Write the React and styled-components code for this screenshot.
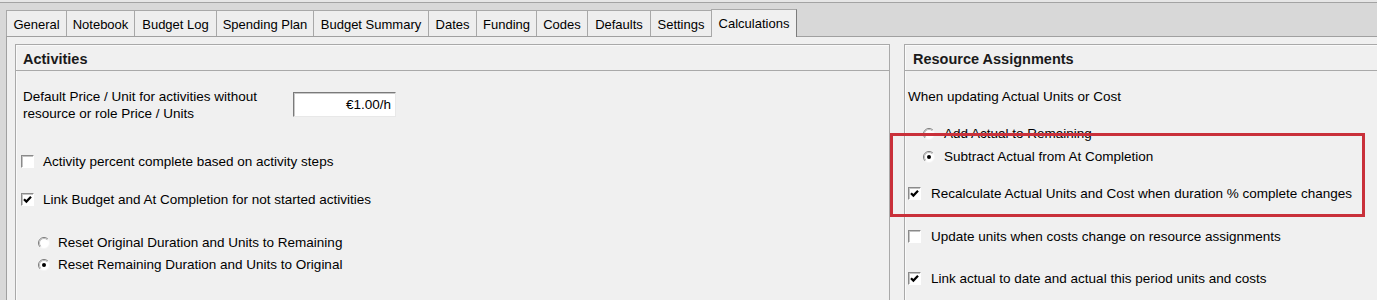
import React from 'react';
import styled, { createGlobalStyle } from 'styled-components';

const GlobalStyle = createGlobalStyle`
    html, body {
        margin: 0;
        padding: 0;
        background: #d8d8d8;
        overflow: hidden;
    }
`;

export const Window = styled.div`
    position: relative;
    width: 1377px;
    height: 300px;
    overflow: hidden;
    display: flex;
    flex-direction: column;
    background: #d8d8d8;
    font-family: "Liberation Sans", Arial, sans-serif;
    color: #000;
`;

export const TopEdge = styled.div`
    height: 2px;
    flex: none;
    background: #e6e6e6;
    border-bottom: 1px solid #a3a3a3;
`;

export const TabStrip = styled.div`
    height: 33px;
    flex: none;
    display: flex;
    align-items: flex-end;
    padding-left: 6px;
`;

export const Tab = styled.div`
    box-sizing: border-box;
    width: ${(p) => p.$w}px;
    height: ${(p) => (p.$active ? 28 : 26)}px;
    margin-bottom: ${(p) => (p.$active ? -1 : 0)}px;
    position: relative;
    z-index: ${(p) => (p.$active ? 2 : 0)};
    display: flex;
    align-items: center;
    justify-content: center;
    font-size: 13px;
    background: ${(p) => (p.$active ? '#f0f0f0' : '#eeeeee')};
    border-top: 1px solid #a8a8a8;
    border-left: 1px solid #a8a8a8;
    border-right: ${(p) => (p.$active ? '1px solid #7c7c7c' : 'none')};
    padding-top: ${(p) => (p.$active ? 0 : 1)}px;
`;

export const Panel = styled.div`
    flex: 1;
    margin-left: 6px;
    border-top: 1px solid #a0a0a0;
    border-left: 1px solid #a0a0a0;
    background: #f0f0f0;
    padding: 7px 0 0 8px;
    display: flex;
    gap: 14px;
`;

export const Group = styled.div`
    box-sizing: border-box;
    flex: none;
    width: ${(p) => p.$w}px;
    height: 290px;
    border: 1px solid #a9a9a9;
    box-shadow: inset 1px 1px 0 #fafafa;
    display: flex;
    flex-direction: column;
`;

export const GroupHeader = styled.div`
    height: 26px;
    flex: none;
    border-bottom: 1px solid #a9a9a9;
    display: flex;
    align-items: center;
    padding: 2px 0 0 ${(p) => p.$pl}px;
    box-sizing: border-box;
    font-weight: bold;
    font-size: 14.5px;
    color: #1a1a1a;
`;

export const GroupBody = styled.div`
    padding-left: ${(p) => p.$pl}px;
    display: flex;
    flex-direction: column;
    font-size: 13.5px;
`;

export const Row = styled.div`
    display: flex;
    align-items: center;
    height: 17px;
    line-height: 17px;
    margin-top: ${(p) => p.$mt}px;
    padding-left: ${(p) => p.$indent || 0}px;
    gap: ${(p) => p.$gap || 9}px;
    white-space: nowrap;
`;

export const PriceRow = styled.div`
    display: flex;
    align-items: center;
    margin-top: 16px;
    padding-left: 2px;
`;

export const PriceLabel = styled.div`
    width: 270px;
    line-height: 17px;
    padding-top: 1px;
`;

export const PriceInput = styled.div`
    box-sizing: border-box;
    width: 103px;
    height: 25px;
    background: #fff;
    border-style: solid;
    border-width: 1px;
    border-color: #7a7a7a #e8e8e8 #e8e8e8 #7a7a7a;
    box-shadow: inset 1px 1px 0 #c8c8c8;
    display: flex;
    align-items: center;
    justify-content: flex-end;
    padding-right: 4px;
    font-size: 13.5px;
`;

export const Box = styled.span`
    box-sizing: border-box;
    flex: none;
    width: 13px;
    height: 13px;
    background: #fff;
    border-style: solid;
    border-width: 1px;
    border-color: #8a8a8a #ffffff #ffffff #8a8a8a;
    box-shadow: inset 1px 1px 0 #c4c4c4;
    display: flex;
    align-items: center;
    justify-content: center;
`;

export const Annotation = styled.div`
    position: absolute;
    left: 890px;
    top: 133px;
    width: 475px;
    height: 84px;
    box-sizing: border-box;
    border: 3px solid #c9303a;
    pointer-events: none;
`;

const CheckBox = ({ checked }) => (
    <Box>
        {checked && (
            <svg width="9" height="9" viewBox="0 0 9 9">
                <path d="M1 4.2 L3.4 6.6 L8 1.8" fill="none" stroke="#000" strokeWidth="2.2" />
            </svg>
        )}
    </Box>
);

const Radio = ({ checked }) => (
    <svg width="12" height="12" viewBox="0 0 12 12" style={{ flex: 'none' }}>
        <circle cx="6" cy="6" r="5.5" fill="#fff" />
        <path d="M9.9 2.1 A5.5 5.5 0 0 0 2.1 9.9" fill="none" stroke="#7a7a7a" strokeWidth="1" />
        <path d="M9.2 2.8 A4.5 4.5 0 0 0 2.8 9.2" fill="none" stroke="#bcbcbc" strokeWidth="1" />
        <path d="M9.9 2.1 A5.5 5.5 0 0 1 2.1 9.9" fill="none" stroke="#f4f4f4" strokeWidth="1" />
        {checked && <circle cx="6" cy="6" r="2" fill="#000" />}
    </svg>
);

const tabs = [
    ['General', 60],
    ['Notebook', 68],
    ['Budget Log', 82],
    ['Spending Plan', 97],
    ['Budget Summary', 115],
    ['Dates', 48],
    ['Funding', 60],
    ['Codes', 51],
    ['Defaults', 63],
    ['Settings', 61],
    ['Calculations', 86],
];

const App = () => {
    return (
        <Window>
            <GlobalStyle />
            <TopEdge />
            <TabStrip>
                {tabs.map(([name, w]) => (
                    <Tab key={name} $w={w} $active={name === 'Calculations'}>
                        {name}
                    </Tab>
                ))}
            </TabStrip>
            <Panel>
                <Group $w={875}>
                    <GroupHeader $pl={7}>Activities</GroupHeader>
                    <GroupBody $pl={5}>
                        <PriceRow>
                            <PriceLabel>
                                Default Price / Unit for activities without resource or role Price / Units
                            </PriceLabel>
                            <PriceInput>€1.00/h</PriceInput>
                        </PriceRow>
                        <Row $mt={31}>
                            <CheckBox />
                            Activity percent complete based on activity steps
                        </Row>
                        <Row $mt={21}>
                            <CheckBox checked />
                            Link Budget and At Completion for not started activities
                        </Row>
                        <Row $mt={26} $indent={17} $gap={8}>
                            <Radio />
                            Reset Original Duration and Units to Remaining
                        </Row>
                        <Row $mt={5} $indent={17} $gap={8}>
                            <Radio checked />
                            Reset Remaining Duration and Units to Original
                        </Row>
                    </GroupBody>
                </Group>
                <Group $w={520}>
                    <GroupHeader $pl={8}>Resource Assignments</GroupHeader>
                    <GroupBody $pl={3}>
                        <Row $mt={17}>When updating Actual Units or Cost</Row>
                        <Row $mt={20} $indent={15} $gap={9}>
                            <Radio />
                            Add Actual to Remaining
                        </Row>
                        <Row $mt={6} $indent={15} $gap={9}>
                            <Radio checked />
                            Subtract Actual from At Completion
                        </Row>
                        <Row $mt={20} $gap={10}>
                            <CheckBox checked />
                            Recalculate Actual Units and Cost when duration % complete changes
                        </Row>
                        <Row $mt={26} $gap={10}>
                            <CheckBox />
                            Update units when costs change on resource assignments
                        </Row>
                        <Row $mt={25} $gap={10}>
                            <CheckBox checked />
                            Link actual to date and actual this period units and costs
                        </Row>
                    </GroupBody>
                </Group>
            </Panel>
            <Annotation />
        </Window>
    );
};

export default App;
